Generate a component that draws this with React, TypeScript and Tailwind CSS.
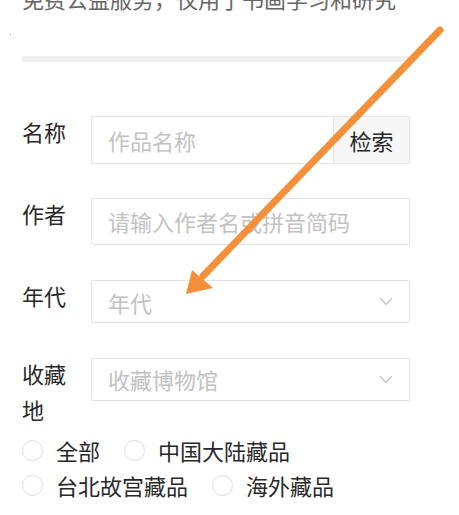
import React from "react";

const font = { fontFamily: '"Noto Sans CJK SC", "Noto Sans", sans-serif' };

const Chevron = () => (
  <svg width="14" height="9" viewBox="0 0 14 9" fill="none" className="shrink-0">
    <path d="M1 1l6 6.5L13 1" stroke="#c4c4c4" strokeWidth="1.3" />
  </svg>
);

const Radio = ({ label }: { label: string }) => (
  <label className="flex items-center gap-[13px]">
    <span className="h-[21px] w-[21px] rounded-full border border-[#dcdcdc] bg-white" />
    <span className="text-[22px] leading-[35px] text-[#282828]">{label}</span>
  </label>
);

const Row = ({
  label,
  children,
  className = "",
}: {
  label: string;
  children: React.ReactNode;
  className?: string;
}) => (
  <div className={`flex items-start ${className}`}>
    <div className="-mt-[3px] w-[44px] shrink-0 text-[22px] leading-[36px] text-[#282828] [word-break:break-all]">
      {label}
    </div>
    <div className="ml-[25px] flex-1">{children}</div>
  </div>
);

export default function App() {
  return (
    <div
      className="relative h-[515px] w-[459px] overflow-hidden bg-white"
      style={font}
    >
      <span className="absolute left-[10px] top-[34px] h-[1px] w-[1px] bg-[#999]" />

      <div className="pl-[22px] pr-[49px]">
        <p className="-mt-[13px] whitespace-nowrap text-[22px] leading-[22px] text-[#666]">
          免费公益服务，仅用于书画学习和研究
        </p>

        <div className="mt-[47px] h-[6px] bg-[#efefef]" />

        <Row label="名称" className="mt-[54px]">
          <div className="flex h-[48px] overflow-hidden rounded-[2px] border border-[#e2e2e2]">
            <span className="flex flex-1 items-center pl-[16px] text-[22px] text-[#c2c2c2]">
              作品名称
            </span>
            <span className="flex w-[76px] items-center justify-center border-l border-[#e2e2e2] bg-[#f7f7f7] text-[22px] text-[#282828]">
              检索
            </span>
          </div>
        </Row>

        <Row label="作者" className="mt-[34px]">
          <div className="flex h-[47px] items-center rounded-[2px] border border-[#e2e2e2] pl-[16px] text-[22px] text-[#c2c2c2]">
            请输入作者名或拼音简码
          </div>
        </Row>

        <Row label="年代" className="mt-[35px]">
          <div className="flex h-[43px] items-center justify-between rounded-[2px] border border-[#e2e2e2] pl-[16px] pr-[16px] text-[22px] text-[#c2c2c2]">
            <span className="mt-[2px]">年代</span>
            <Chevron />
          </div>
        </Row>

        <Row label="收藏地" className="mt-[35px]">
          <div className="flex h-[43px] items-center justify-between rounded-[2px] border border-[#e2e2e2] pl-[16px] pr-[16px] text-[22px] text-[#c2c2c2]">
            <span>收藏博物馆</span>
            <Chevron />
          </div>
        </Row>

        <div className="mt-[6px] flex flex-col">
          <div className="flex items-center gap-[24px]">
            <Radio label="全部" />
            <Radio label="中国大陆藏品" />
          </div>
          <div className="flex items-center gap-[24px]">
            <Radio label="台北故宫藏品" />
            <Radio label="海外藏品" />
          </div>
        </div>
      </div>

      <svg
        className="pointer-events-none absolute left-0 top-0"
        width="459"
        height="515"
        viewBox="0 0 459 515"
      >
        <line x1="440" y1="30" x2="203" y2="276" stroke="#f5903a" strokeWidth="7" strokeLinecap="round" />
        <polygon points="186,294 192,270 213,288" fill="#f5903a" />
      </svg>
    </div>
  );
}
